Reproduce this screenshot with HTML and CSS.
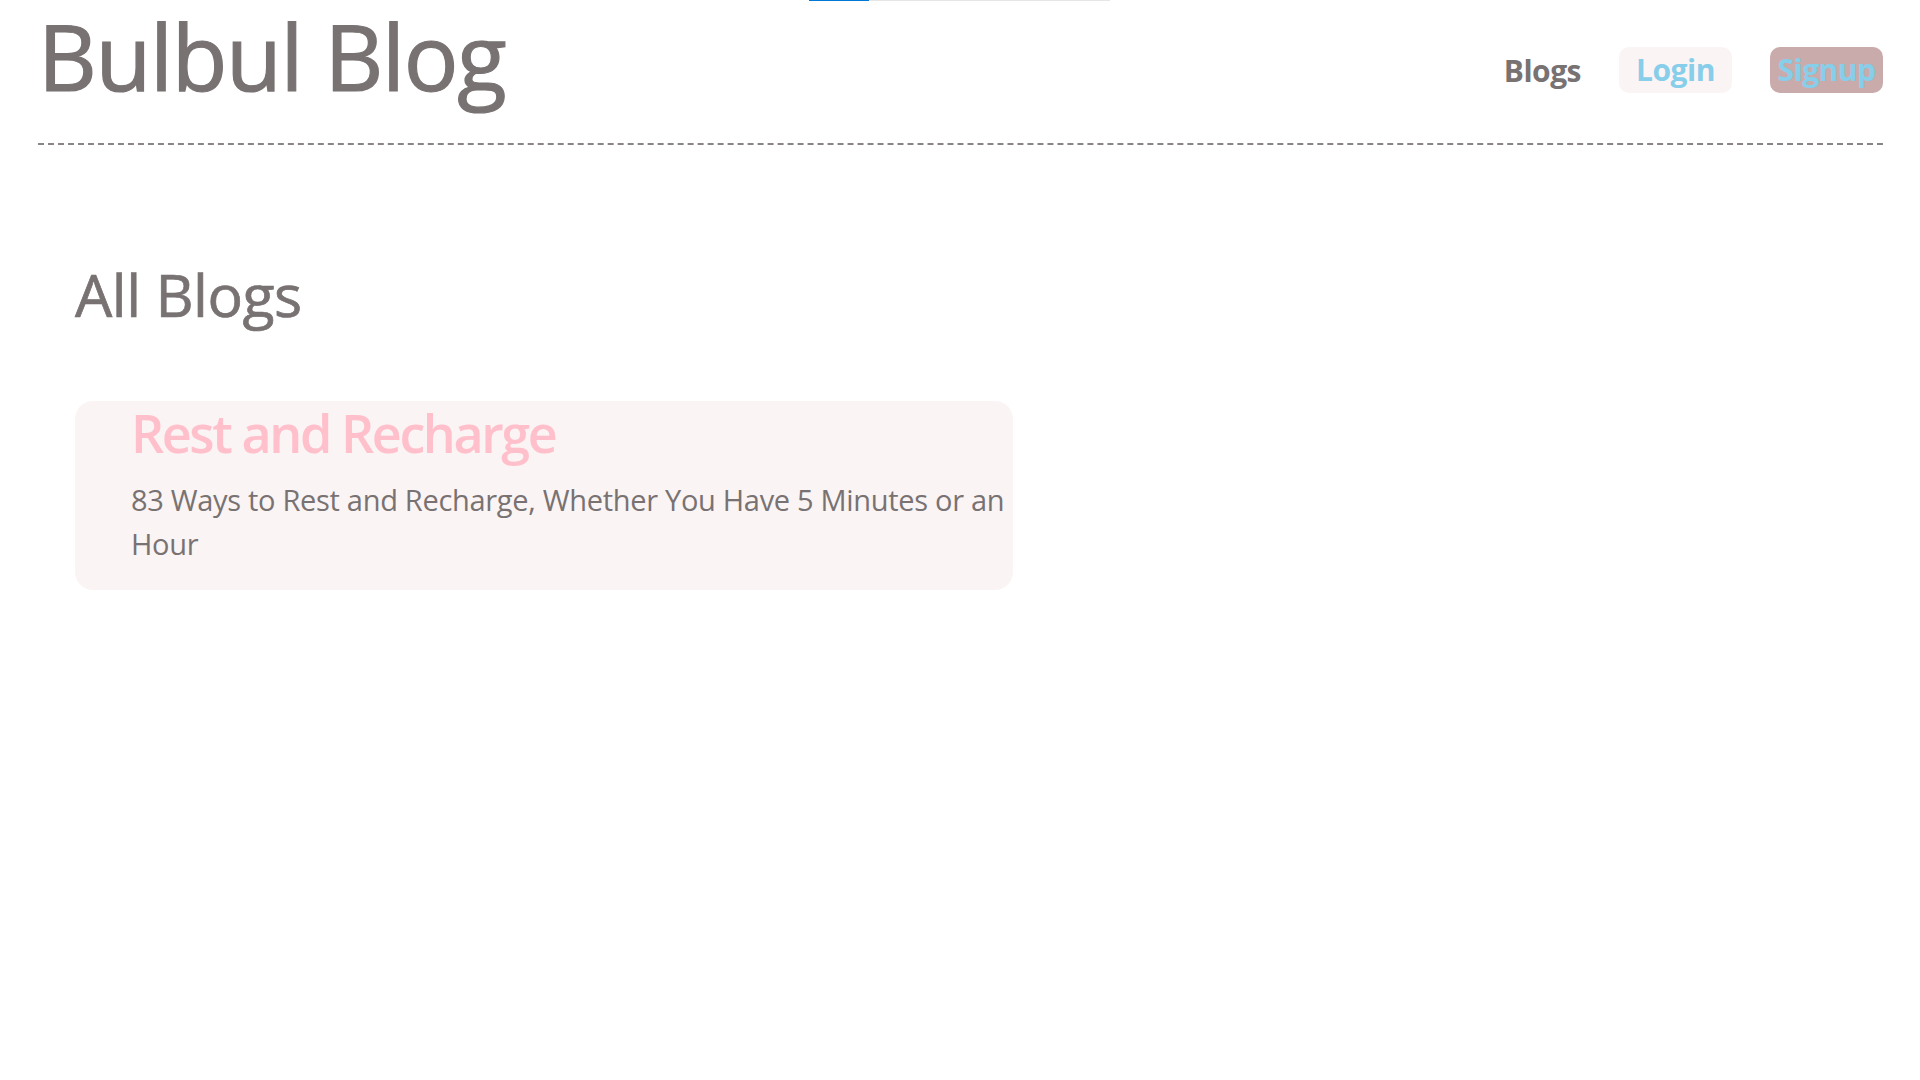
FILE: index.html
```html
<!DOCTYPE html>
<html lang="en">
<head>
<meta charset="utf-8">
<title>Bulbul Blog</title>
<link rel="stylesheet" href="styles.css">
</head>
<body>
<div class="loader"><div class="loader-fill"></div></div>
<div class="page">
  <header class="site-header">
    <h1 class="brand">Bulbul Blog</h1>
    <nav class="nav">
      <a class="nav-link" href="#">Blogs</a>
      <a class="nav-btn nav-login" href="#">Login</a>
      <a class="nav-btn nav-signup" href="#">Signup</a>
    </nav>
  </header>
  <main class="content">
    <h2 class="section-title">All Blogs</h2>
    <div class="blog-list">
      <article class="blog-card">
        <h3 class="blog-title">Rest and Recharge</h3>
        <p class="blog-snippet">83 Ways to Rest and Recharge, Whether You Have 5 Minutes or an Hour</p>
      </article>
    </div>
  </main>
</div>
</body>
</html>
```
FILE: styles.css
```css
html, body {
  margin: 0;
  padding: 0;
  background: #ffffff;
}
body {
  font-family: "Open Sans", "Noto Sans", "DejaVu Sans", sans-serif;
  color: #787272;
}
.loader {
  position: absolute;
  top: 0;
  left: 809px;
  width: 301px;
  height: 1px;
  background: #e6e6e6;
}
.loader-fill {
  width: 60px;
  height: 100%;
  background: #0078d4;
}
.page {
  margin: 0 37px 0 38px;
}
.site-header {
  display: flex;
  justify-content: space-between;
  align-items: flex-start;
  padding-bottom: 32px;
  border-bottom: 2px dashed #8a8585;
}
.brand {
  margin: 0;
  padding-top: 1px;
  font-size: 91px;
  line-height: 110px;
  font-weight: 400;
  letter-spacing: -1.3px;
  -webkit-text-stroke: 1.2px #787272;
  color: #787272;
}
.nav {
  display: flex;
  align-items: center;
  gap: 38px;
  margin-top: 46px;
}
.nav-link, .nav-btn {
  font-size: 30px;
  font-weight: 700;
  text-decoration: none;
  line-height: 46px;
  letter-spacing: -0.5px;
}
.nav-link {
  color: #787272;
  padding-top: 2px;
}
.nav-btn {
  display: flex;
  justify-content: center;
  width: 113px;
  height: 46px;
  border-radius: 10px;
  color: #87ceeb;
}
.nav-login {
  background: #fbf4f4;
}
.nav-signup {
  background: #c8abaa;
}
.content {
  padding: 0 37px;
}
.section-title {
  margin: 114px 0 72px 0;
  font-size: 59px;
  line-height: 70px;
  font-weight: 400;
  letter-spacing: -0.5px;
  -webkit-text-stroke: 0.7px #787272;
  color: #787272;
}
.blog-list {
  display: flex;
  flex-direction: column;
}
.blog-card {
  width: 938px;
  box-sizing: border-box;
  background: #fbf4f4;
  border-radius: 18px;
  padding: 1px 8px 24px 56px;
}
.blog-title {
  margin: 0;
  font-size: 52px;
  line-height: 62px;
  font-weight: 600;
  letter-spacing: -2.4px;
  color: #ffc0cb;
}
.blog-snippet {
  margin: 14px 0 0 0;
  font-size: 29px;
  line-height: 44px;
  letter-spacing: -0.3px;
  color: #787272;
}
```
